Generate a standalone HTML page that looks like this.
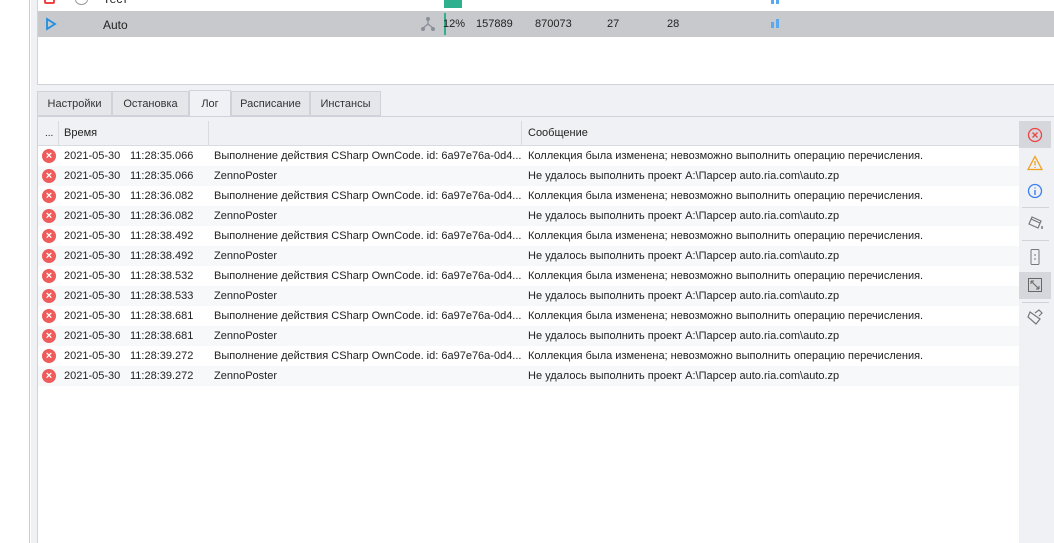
<!DOCTYPE html><html><head><meta charset="utf-8"><style>
*{margin:0;padding:0;box-sizing:border-box}
body{width:1054px;height:543px;overflow:hidden;background:#fff;font-family:"Liberation Sans",sans-serif;font-size:11px;color:#222;position:relative}
.a{position:absolute;white-space:nowrap}
.row{position:absolute;left:38px;width:981px;height:20px}
.row span{position:absolute;top:4px}
.x{position:absolute;left:4px;top:3px;width:14px;height:14px;border-radius:50%;background:#ef5a5a;color:#fff;font-size:11px;line-height:14px;text-align:center;font-weight:bold}
.tab{position:absolute;top:91px;height:25px;background:#e4e6ea;border:1px solid #cfd2d8;font-size:11px;line-height:25px;text-align:center;color:#333}
</style></head><body>
<div class="a" style="left:0;top:0;width:30px;height:543px;background:#fff;border-right:1px solid #c8ccd4"></div>
<div class="a" style="left:31px;top:0;width:1023px;height:543px;background:#f0f1f5"></div>
<div class="a" style="left:37px;top:0;width:1017px;height:85px;background:#fff;border-left:1px solid #cfd2d8;border-bottom:1px solid #cfd2d8"></div>
<div class="a" style="left:44px;top:-6px;width:11px;height:10px;border:2px solid #e44;border-radius:2px"></div>
<div class="a" style="left:75px;top:-6px;width:13px;height:11px;border:1px solid #999;border-radius:50%"></div>
<div class="a" style="left:103px;top:-8px;font-size:12px">Тест</div>
<div class="a" style="left:444px;top:0;width:18px;height:8px;background:#2eb08f"></div>
<div class="a" style="left:38px;top:11px;width:1016px;height:26px;background:#c8c9cd"></div>
<svg class="a" style="left:45px;top:17px" width="12" height="14"><path d="M2 2 L10 7 L2 12 Z" fill="none" stroke="#1e8fe0" stroke-width="1.8"/></svg>
<div class="a" style="left:103px;top:18px;font-size:12px">Auto</div>
<svg class="a" style="left:420px;top:16px" width="16" height="16"><circle cx="8" cy="3" r="2" fill="#8a8f99"/><circle cx="3" cy="13" r="2" fill="#8a8f99"/><circle cx="13" cy="13" r="2" fill="#8a8f99"/><path d="M8 4V9M3 12L8 8L13 12" stroke="#8a8f99" fill="none" stroke-width="1.3"/></svg>
<div class="a" style="left:444px;top:13px;width:2px;height:22px;background:#2eb08f"></div>
<div class="a" style="left:443px;top:18px">12%</div>
<div class="a" style="left:476px;top:18px">157889</div>
<div class="a" style="left:535px;top:18px">870073</div>
<div class="a" style="left:607px;top:18px">27</div>
<div class="a" style="left:667px;top:18px">28</div>
<div class="a" style="left:771px;top:22px;width:3px;height:6px;background:#5aa8f0"></div><div class="a" style="left:776px;top:19px;width:3px;height:9px;background:#5aa8f0"></div>
<div class="a" style="left:771px;top:-4px;width:3px;height:8px;background:#5aa8f0"></div><div class="a" style="left:776px;top:-4px;width:3px;height:8px;background:#5aa8f0"></div>
<div class="tab" style="left:37px;width:75px">Настройки</div>
<div class="tab" style="left:112px;width:77px">Остановка</div>
<div class="tab" style="left:189px;top:90px;height:27px;width:42px;background:#f0f1f5;border-bottom:none;line-height:27px">Лог</div>
<div class="tab" style="left:231px;width:79px">Расписание</div>
<div class="tab" style="left:310px;width:71px">Инстансы</div>
<div class="a" style="left:37px;top:116px;width:1017px;height:427px;border-left:1px solid #cfd2d8;border-top:1px solid #cfd2d8"></div>
<div class="a" style="left:38px;top:146px;width:981px;height:397px;background:#fff"></div>
<div class="a" style="left:38px;top:119px;width:981px;height:27px;background:#f0f1f5;border-bottom:1px solid #d8dbe0"></div>
<div class="a" style="left:58px;top:121px;width:1px;height:24px;background:#d8dbe0"></div>
<div class="a" style="left:208px;top:121px;width:1px;height:24px;background:#d8dbe0"></div>
<div class="a" style="left:521px;top:121px;width:1px;height:24px;background:#d8dbe0"></div>
<div class="a" style="left:45px;top:128px;font-size:10px">...</div>
<div class="a" style="left:64px;top:127px">Время</div>
<div class="a" style="left:528px;top:127px">Сообщение</div>
<div id="rows"></div>
<script>
var t=["11:28:35.066","11:28:35.066","11:28:36.082","11:28:36.082","11:28:38.492","11:28:38.492","11:28:38.532","11:28:38.533","11:28:38.681","11:28:38.681","11:28:39.272","11:28:39.272"],h="";
for(var i=0;i<12;i++){var o=i%2==0;h+='<div class="row" style="top:'+(146+i*20)+'px;background:'+(o?'#fff':'#f7f8fa')+'"><div class="x">×</div><span style="left:26px">2021-05-30</span><span style="left:92px">'+t[i]+'</span><span style="left:176px">'+(o?'Выполнение действия CSharp OwnCode. id: 6a97e76a-0d4...':'ZennoPoster')+'</span><span style="left:490px">'+(o?'Коллекция была изменена; невозможно выполнить операцию перечисления.':'Не удалось выполнить проект A:\\Парсер auto.ria.com\\auto.zp')+'</span></div>';}
document.getElementById('rows').innerHTML=h;
</script>
<div class="a" style="left:1019px;top:121px;width:32px;height:27px;background:#d5d7dc"></div>
<svg class="a" style="left:1027px;top:127px" width="16" height="16"><circle cx="8" cy="8" r="6.5" fill="none" stroke="#e44" stroke-width="1.3"/><path d="M5.5 5.5L10.5 10.5M10.5 5.5L5.5 10.5" stroke="#e44" stroke-width="1.3"/></svg>
<svg class="a" style="left:1027px;top:155px" width="16" height="16"><path d="M8 1.5L15 14.5H1Z" fill="none" stroke="#f0a020" stroke-width="1.3"/><path d="M8 6V10.5M8 12V13" stroke="#f0a020" stroke-width="1.3"/></svg>
<svg class="a" style="left:1027px;top:183px" width="16" height="16"><circle cx="8" cy="8" r="6.5" fill="none" stroke="#3a7ef0" stroke-width="1.3"/><path d="M8 7V12M8 4.5V5.5" stroke="#3a7ef0" stroke-width="1.4"/></svg>
<div class="a" style="left:1022px;top:207px;width:27px;height:1px;background:#d0d3d8"></div>
<svg class="a" style="left:1027px;top:215px" width="17" height="16"><path d="M5 2L14 6L11 13L2 9Z M4 4L13 8" fill="none" stroke="#777" stroke-width="1.2"/><path d="M15 11v3" stroke="#777" stroke-width="1.5"/></svg>
<div class="a" style="left:1022px;top:240px;width:27px;height:1px;background:#d0d3d8"></div>
<svg class="a" style="left:1028px;top:248px" width="14" height="18"><rect x="3" y="1.5" width="8" height="15" rx="1" fill="none" stroke="#777"/><path d="M7 6V8M7 10V12" stroke="#777"/></svg>
<div class="a" style="left:1019px;top:272px;width:32px;height:27px;background:#d5d7dc"></div>
<svg class="a" style="left:1027px;top:277px" width="16" height="16"><rect x="1.5" y="1.5" width="13" height="13" fill="none" stroke="#666"/><path d="M4 4L12 12M4 4H7M4 4V7M12 12H9M12 12V9" stroke="#666"/></svg>
<div class="a" style="left:1022px;top:302px;width:27px;height:1px;background:#d0d3d8"></div>
<svg class="a" style="left:1027px;top:309px" width="16" height="18"><path d="M3 3L13 10L9 15L1 8Z M8 4L12 1L15 4L12 7" fill="none" stroke="#777" stroke-width="1.2"/></svg>
</body></html>
